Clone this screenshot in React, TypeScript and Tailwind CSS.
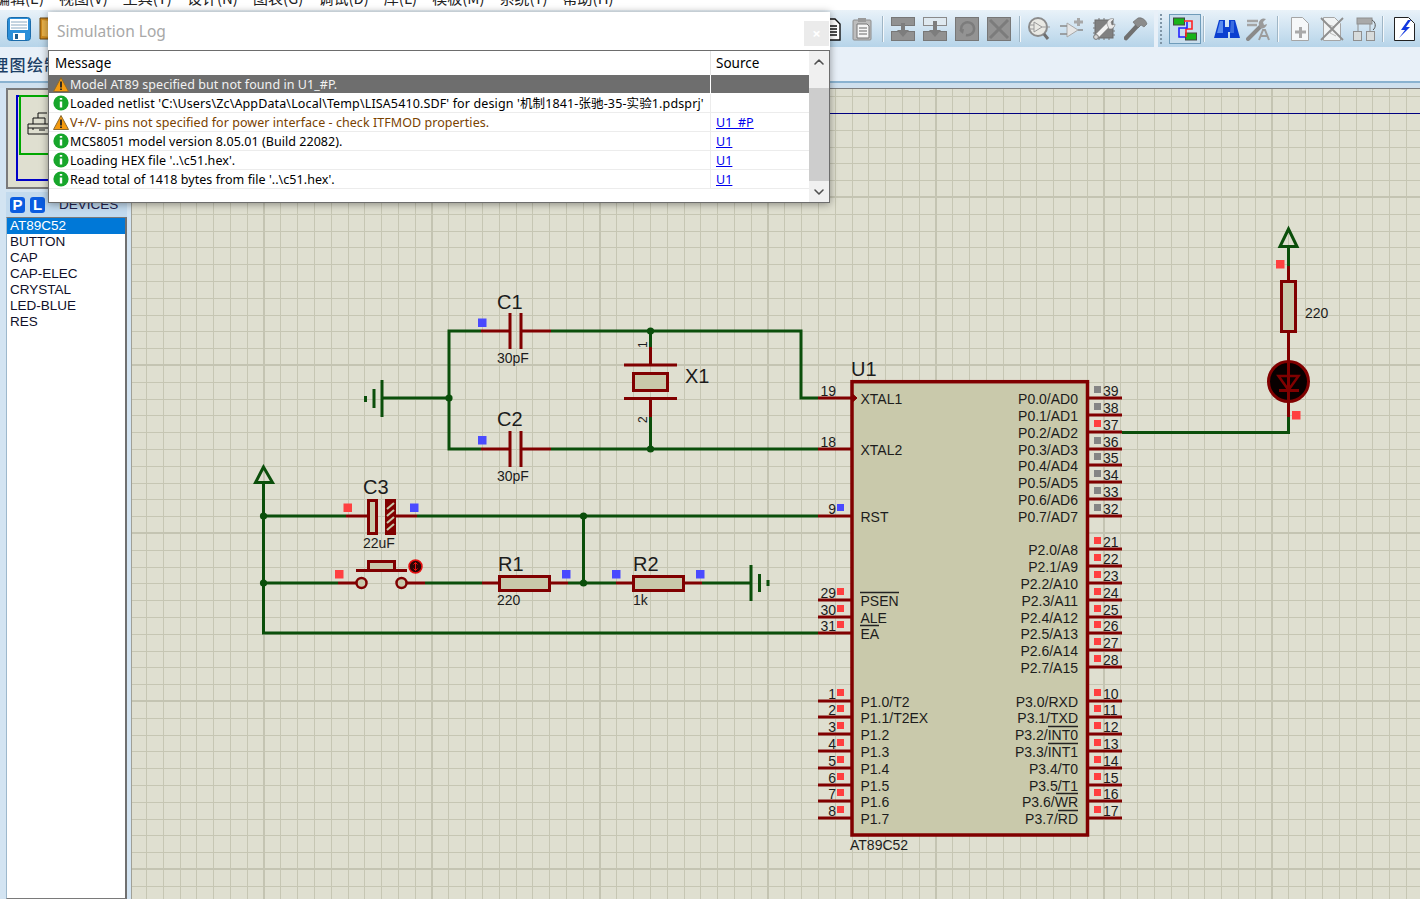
import React from 'react';
import { ChevronUp, ChevronDown } from 'lucide-react';

const RED = '#800000';
const GREEN = '#0b4f0b';
const BODY = '#c9c9ab';
const INK = '#1c1c1c';

const menus = ['编辑(E)', '视图(V)', '工具(T)', '设计(N)', '图表(G)', '调试(D)', '库(L)', '模板(M)', '系统(Y)', '帮助(H)'];
const devices = ['AT89C52', 'BUTTON', 'CAP', 'CAP-ELEC', 'CRYSTAL', 'LED-BLUE', 'RES'];

type Row = { kind: 'warn' | 'info'; text: string; source?: string; selected?: boolean; tint?: boolean; wide?: boolean };

const logRows: Row[] = [
  { kind: 'warn', text: 'Model AT89 specified but not found in U1_#P.', selected: true },
  { kind: 'info', text: "Loaded netlist 'C:\\Users\\Zc\\AppData\\Local\\Temp\\LISA5410.SDF' for design '机制1841-张驰-35-实验1.pdsprj'", wide: true },
  { kind: 'warn', text: 'V+/V- pins not specified for power interface - check ITFMOD properties.', source: 'U1_#P', tint: true },
  { kind: 'info', text: 'MCS8051 model version 8.05.01 (Build 22082).', source: 'U1' },
  { kind: 'info', text: "Loading HEX file '..\\c51.hex'.", source: 'U1' },
  { kind: 'info', text: "Read total of 1418 bytes from file '..\\c51.hex'.", source: 'U1' },
];

// left side pins of the chip: [number, y, label, marker]
const leftPins: [string, number, string, string][] = [
  ['19', 398, 'XTAL1', ''], ['18', 449, 'XTAL2', ''], ['9', 516, 'RST', 'b'],
  ['29', 600, 'PSEN', 'r'], ['30', 617, 'ALE', 'r'], ['31', 633, 'EA', 'r'],
  ['1', 701, 'P1.0/T2', 'r'], ['2', 717, 'P1.1/T2EX', 'r'], ['3', 734, 'P1.2', 'r'], ['4', 751, 'P1.3', 'r'],
  ['5', 768, 'P1.4', 'r'], ['6', 785, 'P1.5', 'r'], ['7', 801, 'P1.6', 'r'], ['8', 818, 'P1.7', 'r'],
];

const rightPins: [string, number, string, string][] = [
  ['39', 398, 'P0.0/AD0', 'g'], ['38', 415, 'P0.1/AD1', 'g'], ['37', 432, 'P0.2/AD2', 'r'], ['36', 449, 'P0.3/AD3', 'g'],
  ['35', 465, 'P0.4/AD4', 'g'], ['34', 482, 'P0.5/AD5', 'g'], ['33', 499, 'P0.6/AD6', 'g'], ['32', 516, 'P0.7/AD7', 'g'],
  ['21', 549, 'P2.0/A8', 'r'], ['22', 566, 'P2.1/A9', 'r'], ['23', 583, 'P2.2/A10', 'r'], ['24', 600, 'P2.3/A11', 'r'],
  ['25', 617, 'P2.4/A12', 'r'], ['26', 633, 'P2.5/A13', 'r'], ['27', 650, 'P2.6/A14', 'r'], ['28', 667, 'P2.7/A15', 'r'],
  ['10', 701, 'P3.0/RXD', 'r'], ['11', 717, 'P3.1/TXD', 'r'], ['12', 734, 'P3.2/INT0', 'r'], ['13', 751, 'P3.3/INT1', 'r'],
  ['14', 768, 'P3.4/T0', 'r'], ['15', 785, 'P3.5/T1', 'r'], ['16', 801, 'P3.6/WR', 'r'], ['17', 818, 'P3.7/RD', 'r'],
];

const markerColor: Record<string, string> = { r: '#ff4040', b: '#4a4aff', g: '#858585' };

function Ico({ children, w = 24 }: { children: React.ReactNode; w?: number }) {
  return (
    <svg width={w} height="24" viewBox={`0 0 ${w} 24`} className="shrink-0">
      {children}
    </svg>
  );
}

function Sep() {
  return <div className="ml-[8px] mr-[7px] h-[26px] w-[2px] shrink-0 bg-[#f4f8fb] border-l border-[#9fb6c6]" />;
}

function Toolbar() {
  return (
    <div className="flex h-[37px] shrink-0 gap-[4px] bg-[#e8f0f8]">
      <div className="flex h-full w-[1154px] items-center overflow-hidden bg-gradient-to-b from-[#e9f2f9] to-[#b6d4e9] pl-[7px]">
        <div className="flex gap-[8px]">
          <Ico>
            <rect x="0.5" y="0.5" width="23" height="23" rx="3" fill="#2b8fd9" stroke="#1b6cab" />
            <rect x="3" y="2" width="18" height="11" fill="#fff" />
            <path d="M4 5h16M4 8h16M4 11h16" stroke="#8aa9c2" />
            <rect x="6" y="16" width="12" height="7" fill="#fff" />
            <rect x="8" y="17" width="3" height="5" fill="#1f5d8e" />
          </Ico>
          <Ico>
            <path d="M1 1h8l6 2v20l-6-1H1z" fill="#d08a1c" stroke="#6b4710" />
            <path d="M3 3l8 1v16l-8-1z" fill="#e8b14a" />
          </Ico>
        </div>
        <div className="ml-[755px] flex gap-[8px]">
          <Ico>
            <path d="M6 2h11l5 5v16H6z" fill="#fff" stroke="#111" strokeWidth="1.4" />
            <path d="M9 9h10M9 12h10M9 15h10M9 18h10" stroke="#111" strokeWidth="1.3" />
          </Ico>
          <Ico>
            <rect x="3" y="3" width="18" height="20" rx="1" fill="#bdbdbd" stroke="#8c8c8c" />
            <rect x="8" y="1" width="8" height="4" fill="#9a9a9a" />
            <path d="M7 7h10l2 2v12H7z" fill="#f6f6f6" stroke="#777" />
            <path d="M9 11h8M9 14h8M9 17h8" stroke="#666" />
          </Ico>
        </div>
        <Sep />
        <div className="flex gap-[8px]">
          <Ico>
            <rect x="0.5" y="0.5" width="23" height="8" fill="#919191" stroke="#777" />
            <rect x="0.5" y="14.5" width="23" height="9" fill="#919191" stroke="#777" />
            <path d="M10 6h4v7h4l-6 7-6-7h4z" fill="#7d7d7d" />
          </Ico>
          <Ico>
            <rect x="0.5" y="0.5" width="23" height="8" fill="#dfe9f0" stroke="#8a8a8a" />
            <rect x="0.5" y="14.5" width="23" height="9" fill="#919191" stroke="#777" />
            <path d="M10 4h4v9h4l-6 7-6-7h4z" fill="#7d7d7d" />
          </Ico>
          <Ico>
            <rect x="0.5" y="0.5" width="23" height="23" fill="#939393" stroke="#777" />
            <path d="M7 15a6.5 6.5 0 1 1 4 3" fill="none" stroke="#7c7c7c" strokeWidth="2.5" />
            <path d="M4 13l5-1-1 5z" fill="#7c7c7c" />
          </Ico>
          <Ico>
            <rect x="0.5" y="0.5" width="23" height="23" fill="#939393" stroke="#777" />
            <path d="M3 3l18 18M21 3L3 21" stroke="#7c7c7c" strokeWidth="3" />
          </Ico>
        </div>
        <Sep />
        <div className="flex gap-[8px]">
          <Ico>
            <circle cx="10" cy="10" r="9" fill="#e9e9e4" stroke="#8c8c8c" strokeWidth="2" />
            <path d="M6 5v10l8-5zM2 8h4M2 12h4M14 10h8" fill="none" stroke="#9a9a9a" />
            <path d="M16 17l4 5" stroke="#6f6f6f" strokeWidth="3" />
          </Ico>
          <Ico>
            <path d="M7 6v14l11-7z" fill="#e6e6e6" stroke="#a9a9a9" />
            <path d="M0 9h7M0 17h7M18 13h5" stroke="#8a8a8a" strokeWidth="1.5" />
            <path d="M14 5h9M18.5 1v8" stroke="#a8a8a8" strokeWidth="3" />
          </Ico>
          <Ico>
            <rect x="3" y="3" width="18" height="18" fill="#808080" stroke="#6d6d6d" />
            <path d="M1 6h2M1 11h2M1 16h2M21 14h2M21 18h2M7 1v2M12 1v2M7 21v2M12 21v2M17 21v2" stroke="#777" />
            <path d="M4 20L17 7" stroke="#f2f2f2" strokeWidth="4" />
            <path d="M15 7a5 5 0 0 1 7-5l-3 3 1 3 3-1a5 5 0 0 1-6 5z" fill="#e9e9e9" stroke="#777" strokeWidth="0.6" />
            <circle cx="4" cy="20" r="2.4" fill="#d8d8d8" stroke="#777" />
          </Ico>
          <Ico>
            <path d="M2 21L14 8" stroke="#707070" strokeWidth="4.5" strokeLinecap="round" />
            <path d="M9 5l5-4c4-1 8 2 9 6l-3 3-3-2-3 3-5-6z" fill="#8b8b8b" stroke="#666" strokeWidth="0.6" />
          </Ico>
        </div>
      </div>
      <div className="flex h-full flex-1 items-center overflow-hidden bg-gradient-to-b from-[#e9f2f9] to-[#b6d4e9]">
        <div className="ml-[2px] h-[30px] w-[3px] shrink-0 border-l-[2px] border-dotted border-[#7f95a6]" />
        <div className="ml-[6px] flex h-[30px] w-[32px] shrink-0 items-center justify-center border border-[#6f9cba] bg-[#c9deed]">
          <Ico>
            <rect x="0.5" y="1" width="11" height="7" fill="#18b318" stroke="#444" />
            <rect x="12.5" y="16" width="11" height="7" fill="#18b318" stroke="#444" />
            <path d="M11 4h8v8h-6v8" fill="none" stroke="#f22" strokeWidth="1.6" />
            <path d="M14 5v6H6v9h6" fill="none" stroke="#22f" strokeWidth="1.6" />
          </Ico>
        </div>
        <div className="ml-[2px] h-[26px] w-[2px] shrink-0 bg-[#f4f8fb] border-l border-[#9fb6c6]" />
        <div className="ml-[9px] flex shrink-0 gap-[6px]">
          <Ico w={26}>
            <path d="M5 3h6v7h4V3h6l5 18h-10v-6h-2v6H0z" fill="#0b3fd0" />
            <path d="M6 4h3v12H3z" fill="#5a8cf0" />
            <path d="M17 4h3v12h-4z" fill="#3b6ce0" />
          </Ico>
          <Ico>
            <path d="M1 4h11M1 8h10" stroke="#a4a4a4" strokeWidth="2.5" />
            <path d="M2 22L15 9" stroke="#8a8a8a" strokeWidth="4" strokeLinecap="round" />
            <path d="M13 8a5 5 0 0 1 7-6l-3 3 1 3 3-1a5 5 0 0 1-7 4z" fill="#9a9a9a" />
            <path d="M13 23l4-10h2l4 10M15 19h6" fill="none" stroke="#9c9c9c" strokeWidth="2" />
          </Ico>
        </div>
        <div className="ml-[7px] mr-[9px] h-[26px] w-[2px] shrink-0 bg-[#f4f8fb] border-l border-[#9fb6c6]" />
        <div className="flex shrink-0 gap-[8px]">
          <Ico>
            <path d="M3.5 0.5h11l6 6v17h-17z" fill="#f6f8f9" stroke="#a5a5a5" />
            <path d="M7 15h11M12.5 10v11" stroke="#a9a9a9" strokeWidth="3" />
          </Ico>
          <Ico>
            <path d="M3.5 0.5h11l6 6v17h-17z" fill="#f1f3f4" stroke="#a5a5a5" />
            <path d="M9 8l6 2-5 6 6 3" fill="none" stroke="#bbb" />
            <path d="M1 1l22 22M23 1L1 23" stroke="#8f8f8f" strokeWidth="1.8" />
          </Ico>
          <Ico>
            <rect x="5" y="1" width="15" height="6" fill="#a9a9a9" stroke="#8f8f8f" />
            <rect x="1.5" y="14.5" width="8" height="9" fill="#d8dcdc" stroke="#8f8f8f" />
            <rect x="14.5" y="14.5" width="8" height="9" fill="#d8dcdc" stroke="#8f8f8f" />
            <path d="M6 7v7M18 7v7" stroke="#8f8f8f" />
            <path d="M20 3a6 6 0 0 1 1 10" fill="none" stroke="#555" />
          </Ico>
        </div>
        <div className="ml-[6px] mr-[10px] h-[26px] w-[2px] shrink-0 bg-[#f4f8fb] border-l border-[#9fb6c6]" />
        <Ico>
          <path d="M0.5 0.5h14l6 6v17h-20z" fill="#fff" stroke="#222" />
          <path d="M14 3l-7 10h4l-6 8 11-11h-4l5-7z" fill="#1238e0" />
        </Ico>
      </div>
    </div>
  );
}

function Sidebar() {
  return (
    <aside className="flex w-[131px] shrink-0 flex-col bg-[#d3e4f2] pl-[6px] pr-[4px]">
      <div className="h-[101px] shrink-0 border-2 border-[#7a7a7a] bg-[#dfdfd0] pl-[8px] pt-[5px]">
        <div className="h-[86px] w-[100px] border-2 border-l-[2px] border-[#0000c8]">
          <div className="ml-[1px] -mt-[2px] h-[60px] w-[96px] border-2 border-[#00a800] pl-[6px] pt-[14px]">
            <svg width="26" height="26" viewBox="0 0 26 26">
              <path d="M1 13h22v10H1zM1 17h22M6 13V7h5V2h9M11 7h7v6M6 17v2M12 19h6" fill="none" stroke="#111" />
            </svg>
          </div>
        </div>
      </div>
      <div className="mt-[3px] flex h-[25px] shrink-0 items-center gap-[5px] bg-[#c2daee] pl-[4px] [font-family:'Liberation_Sans',sans-serif]">
        <span className="flex h-[16px] w-[15px] items-center justify-center rounded-[3px] bg-[#0a5ce0] text-[15px] leading-none font-bold text-white">P</span>
        <span className="flex h-[16px] w-[15px] items-center justify-center rounded-[3px] bg-[#0a5ce0] text-[15px] leading-none font-bold text-white">L</span>
        <span className="ml-[9px] text-[13.5px] leading-none text-[#20204a]">DEVICES</span>
      </div>
      <div className="flex-1 border-y border-l border-r-[2px] border-y-[#7a7a7a] border-l-[#9db8cc] border-r-[#707070] bg-white [font-family:'Liberation_Sans',sans-serif] text-[13.5px] leading-[16px] text-[#10102a]">
        {devices.map((d, i) => (
          <div key={d} className={i === 0 ? 'bg-[#0078d7] pl-[3px] text-white' : 'pl-[3px]'}>
            {d}
          </div>
        ))}
      </div>
    </aside>
  );
}

function GridLines() {
  const xs = Array.from({ length: 78 }, (_, i) => i - 8);
  const ys = Array.from({ length: 50 }, (_, i) => i - 17);
  return (
    <g shapeRendering="crispEdges">
      {xs.map(k => {
        const x = Math.round(263.5 + 16.8 * k);
        return k % 10 === 0 ? null : <line key={k} x1={x} x2={x} y1={88} y2={899} stroke="#c6c6b3" />;
      })}
      {ys.map(k => {
        const y = Math.round(365 + 16.8 * k);
        return k % 10 === 0 ? null : <line key={k} x1={131} x2={1420} y1={y} y2={y} stroke="#c6c6b3" />;
      })}
      {xs.filter(k => k % 10 === 0).map(k => {
        const x = Math.round(263.5 + 16.8 * k);
        return <line key={k} x1={x} x2={x} y1={88} y2={899} stroke="#c4c4b2" strokeWidth={2} />;
      })}
      {ys.filter(k => k % 10 === 0).map(k => {
        const y = Math.round(365 + 16.8 * k);
        return <line key={k} x1={131} x2={1420} y1={y} y2={y} stroke="#c4c4b2" strokeWidth={2} />;
      })}
      <line x1={131} x2={1420} y1={88.5} y2={88.5} stroke="#7d7d7d" />
      <line x1={131.5} x2={131.5} y1={88} y2={899} stroke="#a0a096" />
    </g>
  );
}

function Wire({ d, c = GREEN }: { d: string; c?: string }) {
  return <path d={d} fill="none" stroke={c} strokeWidth={3} />;
}

function Dot({ x, y }: { x: number; y: number }) {
  return <circle cx={x} cy={y} r={3.6} fill={GREEN} />;
}

function Sq({ x, y, c, s = 8.5 }: { x: number; y: number; c: string; s?: number }) {
  return <rect x={x} y={y} width={s} height={s} fill={c} />;
}

function Schematic() {
  return (
    <svg
      width="1289"
      height="811"
      viewBox="131 88 1289 811"
      className="block [font-family:'Liberation_Sans',sans-serif]"
    >
      <GridLines />
      <line x1={131} x2={1420} y1={113.5} y2={113.5} stroke="#000080" />

      {/* wires */}
      <Wire d="M551 331H801V398H818" />
      <Wire d="M481 331H449V449H481" />
      <Wire d="M551 449H818" />
      <Wire d="M650.5 331V347M650.5 417V449" />
      <Wire d="M449 398H382" />
      <Wire d="M382 380V417" />
      <Wire d="M374 389V408M365.5 396V402" />
      <Wire d="M263.5 481V633H818" />
      <path d="M263.5 467L255.5 482.5H272.5Z" fill="none" stroke={GREEN} strokeWidth={3} />
      <Wire d="M263.5 516H346M417 516H818" />
      <Wire d="M583.5 516V583" />
      <Wire d="M263.5 583H338M425 583H482M568 583H616M702 583H751" />
      <Wire d="M751 565V601M759.5 574V592M768 580V586" />
      <Wire d="M1122 432.5H1288.5V417" />
      <path d="M1288.5 229L1280 246.5H1297Z" fill="none" stroke={GREEN} strokeWidth={3} />
      <Wire d="M1288.5 247V266" />
      {[[650.5, 331], [650.5, 449], [449, 398], [263.5, 516], [583.5, 516], [263.5, 583], [583.5, 583]].map(([x, y]) => (
        <Dot key={`${x}-${y}`} x={x} y={y} />
      ))}

      {/* C1 and C2 */}
      {[331, 449].map(y => (
        <g key={y}>
          <Wire c={RED} d={`M481 ${y}H510M521 ${y}H551`} />
          <Wire c={RED} d={`M510 ${y - 18}V${y + 18}M521 ${y - 18}V${y + 18}`} />
        </g>
      ))}
      <text x={497} y={309} fontSize={20} fill={INK}>C1</text>
      <text x={497} y={363} fontSize={14} fill={INK}>30pF</text>
      <text x={497} y={426} fontSize={20} fill={INK}>C2</text>
      <text x={497} y={481} fontSize={14} fill={INK}>30pF</text>
      <Sq x={478} y={318.5} c="#4a4aff" />
      <Sq x={478} y={436} c="#4a4aff" />

      {/* crystal */}
      <Wire c={RED} d="M650.5 347V365M650.5 398V417M624 365H677M624 398.5H677" />
      <rect x={633.5} y={373.5} width={34} height={17} fill={BODY} stroke={RED} strokeWidth={3} />
      <text x={685} y={383} fontSize={20} fill={INK}>X1</text>
      <text transform="translate(647 348) rotate(-90)" fontSize={12} fill={INK}>1</text>
      <text transform="translate(647 423) rotate(-90)" fontSize={12} fill={INK}>2</text>

      {/* C3 */}
      <Wire c={RED} d="M346 516H368M395 516H417" />
      <rect x={368.5} y={500.5} width={8} height={33} fill={BODY} stroke={RED} strokeWidth={3} />
      <rect x={385} y={499} width={11} height={36} fill={RED} />
      <path d="M387 509l7-6M387 516l7-6M387 523l7-6M387 530l7-6" stroke={BODY} strokeWidth={2} />
      <text x={363} y={494} fontSize={20} fill={INK}>C3</text>
      <text x={363} y={548} fontSize={14} fill={INK}>22uF</text>
      <Sq x={343.5} y={503.5} c="#ff4040" />
      <Sq x={410} y={503.5} c="#4a4aff" />

      {/* push button */}
      <Wire c={RED} d="M338 583H356M407 583H425M356 570.5H407" />
      <circle cx={361.5} cy={583} r={5} fill={BODY} stroke={RED} strokeWidth={2.5} />
      <circle cx={401.5} cy={583} r={5} fill={BODY} stroke={RED} strokeWidth={2.5} />
      <rect x={368.5} y={561.5} width={26} height={9} fill={BODY} stroke={RED} strokeWidth={3} />
      <circle cx={415.5} cy={566.5} r={6.5} fill="#2a0505" stroke="#e81010" strokeWidth={1.5} />
      <path d="M415.5 562.5v8M413.5 564.5l2-2 2 2M413.5 568.5l2 2 2-2" fill="none" stroke="#e81010" />
      <Sq x={335} y={570} c="#ff4040" />

      {/* R1 and R2 */}
      <Wire c={RED} d="M482 583H499M550 583H568M616 583H633M684 583H702" />
      <rect x={499.5} y={576.5} width={50} height={14} fill={BODY} stroke={RED} strokeWidth={3} />
      <rect x={633.5} y={576.5} width={50} height={14} fill={BODY} stroke={RED} strokeWidth={3} />
      <text x={498} y={571} fontSize={20} fill={INK}>R1</text>
      <text x={497} y={605} fontSize={14} fill={INK}>220</text>
      <text x={633} y={571} fontSize={20} fill={INK}>R2</text>
      <text x={633} y={605} fontSize={14} fill={INK}>1k</text>
      <Sq x={562} y={570} c="#4a4aff" />
      <Sq x={612} y={570} c="#4a4aff" />
      <Sq x={696} y={570} c="#4a4aff" />

      {/* LED branch */}
      <Wire c={RED} d="M1288.5 266V281M1288.5 332V417" />
      <rect x={1281.5} y={281.5} width={14} height={50} fill={BODY} stroke={RED} strokeWidth={3} />
      <text x={1305} y={318} fontSize={14} fill={INK}>220</text>
      <circle cx={1288.5} cy={381.5} r={20} fill="#080000" stroke={RED} strokeWidth={3} />
      <path d="M1288.5 361V402M1279 390.5H1299" stroke={RED} strokeWidth={3} />
      <path d="M1278.5 376H1298.5L1288.5 390Z" fill="none" stroke={RED} strokeWidth={2.5} />
      <Sq x={1276} y={260} c="#ff4040" />
      <Sq x={1292} y={411} c="#ff4040" />

      {/* chip */}
      <rect x={852} y={381.7} width={235.5} height={453.3} fill={BODY} stroke={RED} strokeWidth={3.5} />
      <text x={851} y={376} fontSize={20} fill={INK}>U1</text>
      <text x={850} y={850} fontSize={14} fill={INK}>AT89C52</text>
      <path d="M852 393.5l5 4.5-5 4.5z" fill={RED} stroke={RED} />
      {leftPins.map(([n, y, label, m]) => (
        <g key={n}>
          <Wire c={RED} d={`M818 ${y}H851`} />
          <text x={836} y={y - 2} textAnchor="end" fontSize={14} fill={INK}>{n}</text>
          {m && <Sq x={837} y={y - 12} c={markerColor[m]} s={7} />}
          <text x={860.5} y={y + 6} fontSize={14} fill={INK}>{label}</text>
        </g>
      ))}
      {rightPins.map(([n, y, label, m]) => (
        <g key={n}>
          <Wire c={RED} d={`M1088 ${y}H1122`} />
          <text x={1103} y={y - 2} fontSize={14} fill={INK}>{n}</text>
          <Sq x={1094} y={y - 12} c={markerColor[m]} s={7} />
          <text x={1078} y={y + 6} textAnchor="end" fontSize={14} fill={INK}>{label}</text>
        </g>
      ))}
      {/* overbars on active low pins */}
      <path d="M860 592.5H899M860 625.5H879M1048 726.5H1078M1048 743.5H1078M1056 793.5H1078M1058 810.5H1078" stroke="#222" strokeWidth={1.5} />
    </svg>
  );
}

function WarnIcon() {
  return (
    <svg width="16" height="15" viewBox="0 0 16 15" className="shrink-0">
      <path d="M8 0.5L15.5 14.5H0.5Z" fill="#f59b10" stroke="#8a6a30" />
      <path d="M8 4.5v6M8 11.5v1.6" stroke="#222" strokeWidth="1.8" />
    </svg>
  );
}

function InfoIcon() {
  return (
    <svg width="16" height="16" viewBox="0 0 16 16" className="shrink-0">
      <circle cx="8" cy="8" r="7.6" fill="#17a62b" />
      <path d="M8 6.5v6M8 3v1.8" stroke="#fff" strokeWidth="2.4" />
    </svg>
  );
}

function SimulationLog() {
  return (
    <div className="absolute left-[48px] top-[12px] flex h-[191px] w-[782px] flex-col bg-white shadow-[0_1px_8px_rgba(0,0,0,0.4)] [font-family:'Noto_Sans','Noto_Sans_CJK_SC',sans-serif]">
      <div className="flex h-[38px] shrink-0 items-center justify-between pl-[9px] pr-[1px]">
        <span className="mt-[2px] text-[15.5px] text-[#a8a8a8]">Simulation Log</span>
        <span className="mt-[4px] flex h-[25px] w-[25px] items-center justify-center bg-[#ebebeb] text-[15px] font-bold text-white">×</span>
      </div>
      <div className="flex min-h-0 flex-1 border border-[#6d6d6d]">
        <div className="min-w-0 flex-1 text-[12.5px] tracking-[0.05px]">
          <div className="flex h-[24px] items-center text-[13.5px] tracking-normal text-black">
            <div className="w-[661px] pl-[6px]">Message</div>
            <div className="flex h-full flex-1 items-center border-l border-[#e4e4e4] pl-[5px]">Source</div>
          </div>
          {logRows.map(r => (
            <div
              key={r.text}
              className={`flex h-[19px] items-center border-b leading-[18px] ${r.selected ? 'border-white bg-[#6e6e6e] text-[#f2f2f2]' : 'border-[#ececec] ' + (r.tint ? 'text-[#7a4200]' : 'text-black')}`}
            >
              <div className="flex w-[661px] shrink-0 items-center gap-[1px] overflow-hidden whitespace-nowrap pl-[4px]">
                {r.kind === 'warn' ? <WarnIcon /> : <InfoIcon />}
                <span className={r.wide ? 'block pt-[2px] tracking-[0.13px]' : 'block pt-[2px]'}>{r.text}</span>
              </div>
              <div className={`h-full flex-1 border-l pl-[5px] pt-[1px] text-[#0000ee] underline ${r.selected ? 'border-white' : 'border-[#ececec]'}`}>
                {r.source}
              </div>
            </div>
          ))}
        </div>
        <div className="flex w-[20px] shrink-0 flex-col items-center bg-[#f0f0f0] text-[#505050]">
          <div className="flex h-[37px] w-full items-start justify-center pt-[3px]">
            <ChevronUp size={16} strokeWidth={2.4} />
          </div>
          <div className="h-[93px] w-full bg-[#cdcdcd]" />
          <div className="flex flex-1 items-center justify-center">
            <ChevronDown size={16} strokeWidth={2.4} />
          </div>
        </div>
      </div>
    </div>
  );
}

export default function App() {
  return (
    <div className="relative flex h-[899px] w-[1420px] flex-col overflow-hidden bg-[#e8f0f8]">
      <div className="h-[10px] shrink-0 overflow-hidden bg-white">
        <div className="-ml-[5px] -mt-[14px] flex gap-[15px] [font-family:'Noto_Sans_CJK_SC',sans-serif] text-[15px] leading-[24px] text-[#222]">
          {menus.map(m => (
            <span key={m}>{m}</span>
          ))}
        </div>
      </div>
      <Toolbar />
      <div className="h-[34px] shrink-0 overflow-hidden pt-[6px]">
        <div className="-ml-[25px] [font-family:'Noto_Sans_CJK_SC',sans-serif] text-[16px] leading-[22px] font-medium tracking-[1.3px] text-[#1c3f66]">原理图绘制</div>
      </div>
      <div className="h-[7px] shrink-0 border-t-[2px] border-[#8ab2d0] bg-[#cfe0ee]" />
      <div className="flex min-h-0 flex-1">
        <Sidebar />
        <div className="flex-1 overflow-hidden bg-[#dfdfd0]">
          <Schematic />
        </div>
      </div>
      <SimulationLog />
    </div>
  );
}
